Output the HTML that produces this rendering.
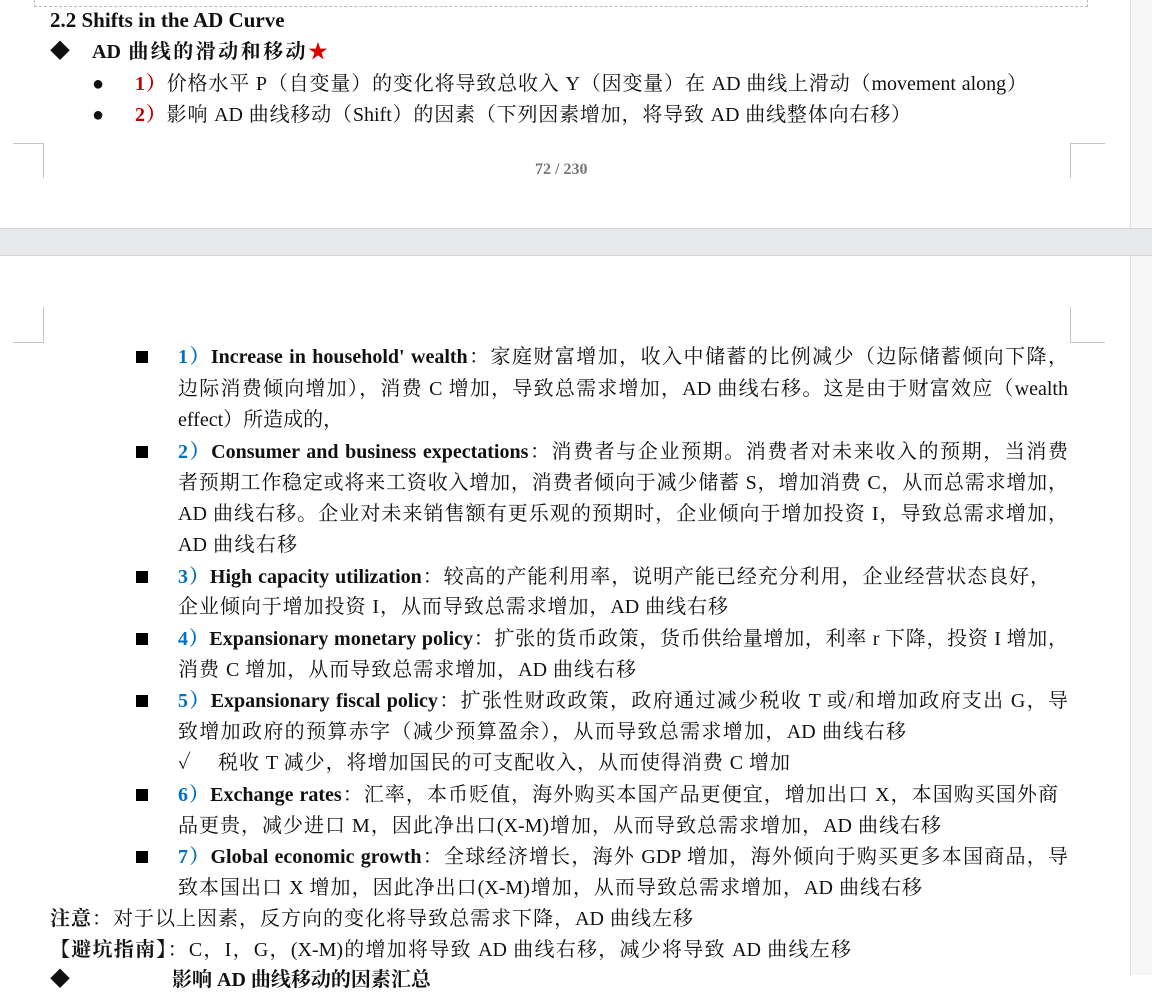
<!DOCTYPE html>
<html><head><meta charset="utf-8"><style>
body{margin:0;width:1152px;height:975px;overflow:hidden;background:#fff;position:relative;font-family:"Liberation Serif","Noto Serif CJK SC",serif;font-size:20px;color:#111}
.l{position:absolute;line-height:31px;height:31px;white-space:nowrap}
.j{text-align:justify;text-align-last:justify;white-space:normal;overflow:hidden}
.b{font-weight:bold}
.bl{color:#0070c0;font-weight:bold}
.rd{color:#c00000;font-weight:bold}
.sq{position:absolute;width:12px;height:12px;background:#000}
.m{position:absolute;background:#c4c4c4}
</style></head><body>
<div style="position:absolute;left:1130px;top:0;width:22px;height:975px;background:#f6f6f6;border-left:1px solid #ddd"></div>
<div style="position:absolute;left:0;top:228px;width:1152px;height:28px;background:#e7e8ea;border-top:1px solid #d2d2d2;border-bottom:1px solid #d2d2d2;box-sizing:border-box"></div>
<div style="position:absolute;left:34px;top:0;width:1052px;height:6px;border:1px dashed #bbb;border-top:none"></div>
<div class="m" style="left:13px;top:143px;width:31px;height:1px"></div>
<div class="m" style="left:43px;top:143px;width:1px;height:35px"></div>
<div class="m" style="left:1070px;top:143px;width:35px;height:1px"></div>
<div class="m" style="left:1070px;top:143px;width:1px;height:35px"></div>
<div class="m" style="left:43px;top:307px;width:1px;height:35px"></div>
<div class="m" style="left:13px;top:342px;width:31px;height:1px"></div>
<div class="m" style="left:1070px;top:307px;width:1px;height:35px"></div>
<div class="m" style="left:1070px;top:342px;width:35px;height:1px"></div>

<div class="l b" style="left:50px;top:5px;font-size:21px">2.2 Shifts in the AD Curve</div>
<div class="l b" style="left:50px;top:37px">◆</div>
<div class="l b j" style="left:92px;top:37px;width:236px">AD 曲线的滑动和移动<span style="color:#d00">★</span></div>
<div class="l" style="left:92px;top:69px">●</div>
<div class="l j" style="left:135px;top:69px;width:892px"><span class="rd">1）</span>价格水平 P（自变量）的变化将导致总收入 Y（因变量）在 AD 曲线上滑动（movement along）</div>
<div class="l" style="left:92px;top:100px">●</div>
<div class="l j" style="left:135px;top:100px;width:776px"><span class="rd">2）</span>影响 AD 曲线移动（Shift）的因素（下列因素增加，将导致 AD 曲线整体向右移）</div>
<div class="l b" style="left:535px;top:154px;font-size:16px;color:#777">72 / 230</div>

<div class="sq" style="left:136px;top:351px"></div>
<div class="l j" style="left:178px;top:342px;width:890px"><span class="bl">1）</span><span class="b">Increase in household' wealth</span>：家庭财富增加，收入中储蓄的比例减少（边际储蓄倾向下降，</div>
<div class="l j" style="left:178px;top:374px;width:890px">边际消费倾向增加），消费 C 增加，导致总需求增加，AD 曲线右移。这是由于财富效应（wealth</div>
<div class="l" style="left:178px;top:405px">effect）所造成的，</div>
<div class="sq" style="left:136px;top:446px"></div>
<div class="l j" style="left:178px;top:437px;width:890px"><span class="bl">2）</span><span class="b">Consumer and business expectations</span>：消费者与企业预期。消费者对未来收入的预期，当消费</div>
<div class="l j" style="left:178px;top:468px;width:890px">者预期工作稳定或将来工资收入增加，消费者倾向于减少储蓄 S，增加消费 C，从而总需求增加，</div>
<div class="l j" style="left:178px;top:499px;width:890px">AD 曲线右移。企业对未来销售额有更乐观的预期时，企业倾向于增加投资 I，导致总需求增加，</div>
<div class="l j" style="left:178px;top:530px;width:119px">AD 曲线右移</div>
<div class="sq" style="left:136px;top:571px"></div>
<div class="l j" style="left:178px;top:562px;width:872px"><span class="bl">3）</span><span class="b">High capacity utilization</span>：较高的产能利用率，说明产能已经充分利用，企业经营状态良好，</div>
<div class="l j" style="left:178px;top:592px;width:550px">企业倾向于增加投资 I，从而导致总需求增加，AD 曲线右移</div>
<div class="sq" style="left:136px;top:633px"></div>
<div class="l j" style="left:178px;top:624px;width:890px"><span class="bl">4）</span><span class="b">Expansionary monetary policy</span>：扩张的货币政策，货币供给量增加，利率 r 下降，投资 I 增加，</div>
<div class="l j" style="left:178px;top:655px;width:458px">消费 C 增加，从而导致总需求增加，AD 曲线右移</div>
<div class="sq" style="left:136px;top:695px"></div>
<div class="l j" style="left:178px;top:686px;width:890px"><span class="bl">5）</span><span class="b">Expansionary fiscal policy</span>：扩张性财政政策，政府通过减少税收 T 或/和增加政府支出 G，导</div>
<div class="l j" style="left:178px;top:717px;width:728px">致增加政府的预算赤字（减少预算盈余），从而导致总需求增加，AD 曲线右移</div>
<div class="l" style="left:178px;top:748px">✓</div>
<div class="l j" style="left:218px;top:748px;width:572px">税收 T 减少，将增加国民的可支配收入，从而使得消费 C 增加</div>
<div class="sq" style="left:136px;top:789px"></div>
<div class="l j" style="left:178px;top:780px;width:880px"><span class="bl">6）</span><span class="b">Exchange rates</span>：汇率，本币贬值，海外购买本国产品更便宜，增加出口 X，本国购买国外商</div>
<div class="l j" style="left:178px;top:811px;width:763px">品更贵，减少进口 M，因此净出口(X-M)增加，从而导致总需求增加，AD 曲线右移</div>
<div class="sq" style="left:136px;top:851px"></div>
<div class="l j" style="left:178px;top:842px;width:890px"><span class="bl">7）</span><span class="b">Global economic growth</span>：全球经济增长，海外 GDP 增加，海外倾向于购买更多本国商品，导</div>
<div class="l j" style="left:178px;top:873px;width:744px">致本国出口 X 增加，因此净出口(X-M)增加，从而导致总需求增加，AD 曲线右移</div>
<div class="l j" style="left:50px;top:904px;width:643px"><span class="b">注意</span>：对于以上因素，反方向的变化将导致总需求下降，AD 曲线左移</div>
<div class="l j" style="left:50px;top:935px;width:801px"><span class="b">【避坑指南】</span>：C，I，G，(X-M)的增加将导致 AD 曲线右移，减少将导致 AD 曲线左移</div>
<div class="l b" style="left:50px;top:965px">◆</div>
<div class="l b" style="left:172px;top:965px">影响 AD 曲线移动的因素汇总</div>
</body></html>
